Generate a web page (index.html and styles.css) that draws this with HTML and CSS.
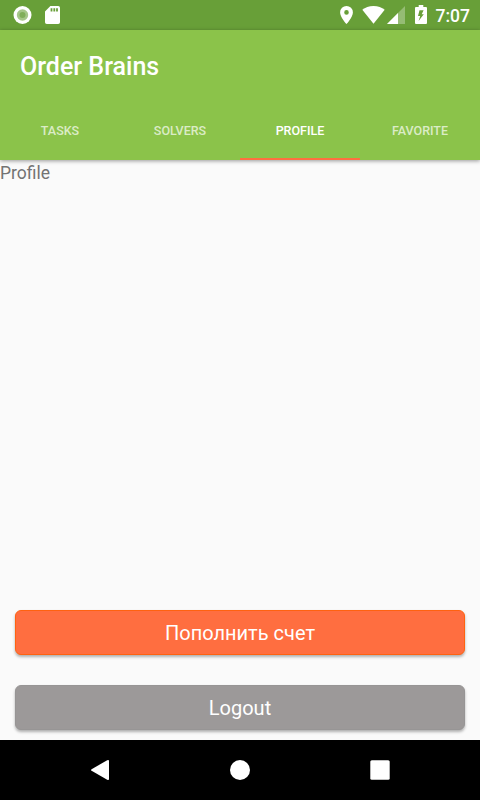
FILE: index.html
```html
<!DOCTYPE html>
<html lang="en">
<head>
  <meta charset="UTF-8" />
  <meta name="viewport" content="width=device-width, initial-scale=1.0"/>
  <title>Order Brains</title>
  <link rel="stylesheet" href="styles.css">
</head>
<body>

  <div class="status-bar">
    <svg class="icon-sync" width="19" height="18" viewBox="0 0 19 18">
      <circle cx="9.5" cy="9" r="9" fill="#fff"/>
      <circle cx="9.5" cy="9" r="5.7" fill="#a5c688"/>
      <circle cx="9.5" cy="9" r="3" fill="#80ae59"/>
    </svg>
    <svg class="icon-sd" width="15" height="18" viewBox="0 0 15 18">
      <path fill="#fff" fill-rule="evenodd" d="M5.4 0H13.2Q15 0 15 1.8V16.2Q15 18 13.2 18H1.8Q0 18 0 16.2V5.4ZM5.6 2.2V5.4H7.4V2.2ZM8.4 2.2V5.4H10.2V2.2ZM11.1 2.2V5.4H12.9V2.2Z"/>
    </svg>
    <span class="spacer"></span>
    <svg class="icon-pin" width="13" height="18" viewBox="0 0 13 18">
      <path fill="#fff" fill-rule="evenodd" d="M6.5 0A6.4 6.4 0 0 0 .1 6.4C.1 11 6.5 18 6.5 18S12.9 11 12.9 6.4A6.4 6.4 0 0 0 6.5 0ZM6.5 4.1A2.3 2.3 0 1 1 6.5 8.7A2.3 2.3 0 1 1 6.5 4.1Z"/>
    </svg>
    <svg class="icon-wifi" width="23" height="18" viewBox="0 0 23 18">
      <path fill="#fff" d="M11.5 17.7L.3 3.8C3.2 1.4 7 0 11.5 0S19.8 1.4 22.7 3.8Z"/>
    </svg>
    <svg class="icon-signal" width="18" height="18" viewBox="0 0 18 18">
      <path fill="#fff" fill-opacity=".3" d="M0 18H18V0Z"/>
      <path fill="#fff" d="M0 18H11V7Z"/>
    </svg>
    <svg class="icon-battery" width="12" height="19" viewBox="0 0 12 19">
      <path fill="#fff" fill-rule="evenodd" d="M3.7 0H8.3V2H11Q12 2 12 3V18Q12 19 11 19H1Q0 19 0 18V3Q0 2 1 2H3.7ZM8.6 5.2H4.5L3 11H5.2L3.6 16L8.8 9.3H6.7Z"/>
    </svg>
    <span class="time">7:07</span>
  </div>

  <header class="app-bar">
    <h1>Order Brains</h1>
    <nav class="tabs">
      <a class="tab">TASKS</a>
      <a class="tab">SOLVERS</a>
      <a class="tab active">PROFILE</a>
      <a class="tab">FAVORITE</a>
    </nav>
  </header>

  <main class="content">
    <p>Profile</p>
    <div class="buttons">
      <button class="btn btn-pay">Пополнить счет</button>
      <button class="btn btn-logout">Logout</button>
    </div>
  </main>

  <footer class="nav-bar">
    <svg width="20" height="22" viewBox="0 0 20 22">
      <path fill="#fff" d="M1.6 10.2L17.2 1.2Q19 .4 19 2V20Q19 21.6 17.2 20.8L1.6 11.8Q.4 11 1.6 10.2Z"/>
    </svg>
    <svg width="20" height="20" viewBox="0 0 20 20">
      <circle cx="10" cy="10" r="10" fill="#fff"/>
    </svg>
    <svg width="20" height="20" viewBox="0 0 20 20">
      <rect x=".3" y=".3" width="19.4" height="19.4" rx="1.5" fill="#fff"/>
    </svg>
  </footer>

</body>
</html>
```
FILE: styles.css
```css
body {
  font-family: Roboto, sans-serif;
  background: #fafafa;
  margin: 0;
  height: 800px;
  display: flex;
  flex-direction: column;
  overflow: hidden;
}

.status-bar {
  background: #689f38;
  height: 30px;
  box-sizing: border-box;
  padding: 0 10px 0 13px;
  display: flex;
  align-items: center;
  color: white;
}

.icon-sd {
  margin-left: 13px;
}

.spacer {
  flex: 1;
}

.icon-pin {
  margin-right: 9px;
}

.icon-wifi {
  margin-right: 2px;
}

.icon-signal {
  margin-right: 10px;
}

.icon-battery {
  margin: 0 8px 1px 0;
}

.time {
  width: 35px;
  text-align: right;
  font-size: 17.5px;
  font-weight: 500;
  line-height: 30px;
  padding-top: 2px;
}

.app-bar {
  background: #8bc34a;
  height: 130px;
  box-shadow: 0 1px 4px rgba(0,0,0,0.4);
  color: white;
}

h1 {
  font-size: 25px;
  font-weight: 500;
  line-height: 70px;
  height: 69px;
  margin: 0;
  padding: 2px 20px 0;
}

.tabs {
  display: grid;
  grid-template-columns: repeat(4, 1fr);
}

.tab {
  height: 59px;
  box-sizing: border-box;
  line-height: 59px;
  text-align: center;
  font-size: 12.5px;
  font-weight: 500;
  color: rgba(255,255,255,0.7);
}

.tab.active {
  color: white;
  border-bottom: 2px solid #ff6e40;
}

.content {
  flex: 1;
  display: flex;
  flex-direction: column;
  justify-content: space-between;
}

.content p {
  margin: 3px 0 0;
  font-size: 17.5px;
  line-height: 21px;
  color: #737373;
}

.buttons {
  display: flex;
  flex-direction: column;
  gap: 30px;
  padding: 0 15px 10px;
}

.btn {
  height: 45px;
  padding: 0;
  border: 1px solid;
  border-radius: 6px;
  font-family: inherit;
  font-size: 20px;
  color: white;
  box-shadow: 0 2px 3px rgba(0,0,0,0.3);
}

.btn-pay {
  background: #ff6e40;
  border-color: #ff6210;
}

.btn-logout {
  background: #9c9999;
  border-color: #979595;
}

.nav-bar {
  background: black;
  height: 60px;
  box-sizing: border-box;
  padding: 0 90px;
  display: flex;
  align-items: center;
  justify-content: space-between;
}
```
